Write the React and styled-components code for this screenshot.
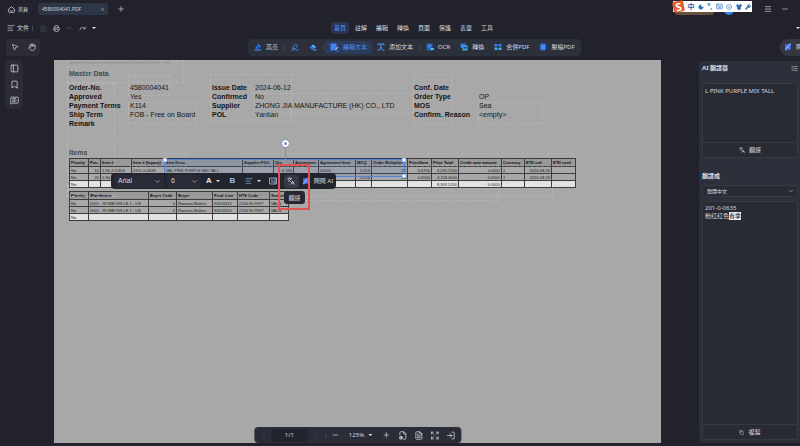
import React from 'react'
import styled, { createGlobalStyle } from 'styled-components'
import {
    AlignLeft, Bookmark, ChevronDown, ChevronLeft, ChevronRight, Copy, Expand, FileCog, FileText,
    Hand, Languages, ListCollapse, LogIn, Menu, MessageSquareText, Minus, MousePointer2, PanelLeft,
    Plus, Printer, Redo, Save, Shirt, Smile, Keyboard, Moon, Undo, Wrench, X,
} from 'lucide-react'

const GlobalStyle = createGlobalStyle`
    * { box-sizing: border-box; }
    body {
        margin: 0;
        background: #21222b;
        color: #d6d8de;
        font-family: "Noto Sans", "Noto Sans CJK TC", sans-serif;
        font-size: 6px;
        line-height: 10px;
    }
    button, select, input, textarea {
        font: inherit;
        color: inherit;
        background: none;
        border: 0;
        margin: 0;
        padding: 0;
    }
    svg { display: block; flex: none; }
    h2, h3, p, dl, dd, dt { margin: 0; }
`

const menus = ['首頁', '註解', '編輯', '轉換', '頁面', '保護', '表單', '工具']

const details = [
    ['Order-No.', '4580004041', 'Issue Date', '2024-06-12', 'Conf. Date', ''],
    ['Approved', 'Yes', 'Confirmed', 'No', 'Order Type', 'OP'],
    ['Payment Terms', 'K114', 'Supplier', 'ZHONG JIA MANUFACTURE (HK) CO., LTD', 'MOS', 'Sea'],
    ['Ship Term', 'FOB - Free on Board', 'POL', 'Yantian', 'Confirm. Reason', '<empty>'],
    ['Remark', '', '', '', '', ''],
]

const itemCols = [
    ['Priority', 19], ['Pos.', 12], ['Item #', 31], ['Item # (legacy)', 33], ['Item Desc.', 78],
    ['Supplier PO#', 31], ['Qty.', 20], ['Agreement', 25], ['Agreement Item', 37], ['MOQ', 16],
    ['Order Multiplier', 36], ['Price/Item', 24], ['Price Total', 27], ['Credit note amount', 43],
    ['Currency', 23], ['ETD ord.', 27], ['ETD conf.', 24],
]
const itemRows = [
    ['No', '10', '1-90-201304', '2201-0-0636', 'VAL PINK PURPLE MIX TALL', '', '6,336', '', '00000', '5,016', '24', '0.6700', '4,245.1200', '0.0000', '1', '2024-08-26', ''],
    ['No', '20', '1-90-201305', '2201-0-0635', '', '', '6,336', '', '00000', '5,016', '24', '0.6500', '4,118.4000', '0.0000', '1', '2024-08-26', ''],
    ['No', '', '', '', '', '', '', '', '', '', '', '', '8,363.5200', '0.0000', '', '', ''],
]
const itemRight = [1, 6, 9, 10, 11, 12, 13, 15]

const storeCols = [
    ['Priority', 19], ['Warehouse', 60], ['Buyer Code', 28], ['Buyer', 36],
    ['Prod. Line', 25], ['HTS Code', 32], ['Season', 19],
]
const storeRows = [
    ['No', '0001 - ROMEOVILLE 1 - US', '0', 'Rowena Malinis', '93010315', '2106.90.9997', 'VALN'],
    ['No', '0001 - ROMEOVILLE 1 - US', '0', 'Rowena Malinis', '93010315', '2106.90.9997', 'VALN'],
    ['No', '', '', '', '', '', ''],
]

// editable text blocks: left, top, width, height
const blocks = [
    [13, 0, 117, 23], [13, 23, 48, 114], [74, 15, 42, 21], [74, 42, 68, 22], [156, 14, 82, 48],
    [200, 33, 160, 21], [359, 14, 39, 50], [424, 42, 65, 22], [76, 93, 57, 14],
    [187, 93, 333, 14], [230, 105, 215, 36], [13, 125, 486, 12],
]

/* ---------- icons ---------- */

const HomeIcon = () => (
    <svg width="7" height="7" viewBox="0 0 16 16" fill="none" stroke="currentColor" strokeWidth="1.8">
        <path d="M1.5 7 8 1.5 14.5 7v6a1.5 1.5 0 0 1-1.5 1.5H3A1.5 1.5 0 0 1 1.5 13zM5.5 10.5c1.5 1.4 3.500 1.400 5 0" />
    </svg>
)

const PenIcon = () => (
    <svg width="8" height="8" viewBox="0 0 16 16">
        <path fill="#2f7df0" d="M3 9 9 2l5 5-5 5H4z" />
        <path fill="#1c4fa8" d="m7 5 5 4-3 3H5z" />
        <path fill="#4a94ff" d="M1 13h13v2H1z" />
    </svg>
)

const MarkerIcon = () => (
    <svg width="8" height="8" viewBox="0 0 16 16">
        <path fill="none" stroke="#3d89f5" strokeWidth="1.7" d="m4 8 5-6 4 4-5 6H4z" />
        <path fill="#3d89f5" d="M1 13h5v2H1zM9 13h6v2H9zM4 8l4 4H4z" />
    </svg>
)

const EraserIcon = () => (
    <svg width="8" height="8" viewBox="0 0 16 16">
        <path fill="#2f6fd8" d="m1 8 7-5 6 5-5 5H5z" />
        <path fill="#58b4f5" d="m8 3 6 5-3 2-6-4zM9 13h6v2H8z" />
    </svg>
)

const EditTextIcon = () => (
    <svg width="9" height="9" viewBox="0 0 18 18">
        <path fill="#3d84f7" d="M1 1h12v7l-6 7H1z" />
        <path fill="#8fc0ff" d="m9 15 1-3 5-5 2 2-5 5z" />
        <path fill="#3d84f7" d="M13 15h4v2h-4z" />
    </svg>
)

const AddTextIcon = () => (
    <svg width="8" height="8" viewBox="0 0 16 16" fill="none" stroke="#4a94ff" strokeWidth="2">
        <path d="M2 5V2h12v3M8 2v6M1 14h4l3-6 3 6h4" />
    </svg>
)

const OcrIcon = () => (
    <svg width="8" height="8" viewBox="0 0 16 16">
        <path fill="#245fbd" d="M1 1h12v14H1z" />
        <path stroke="#5aa1ff" strokeWidth="1.500" d="M3 5h8M3 8h6" />
        <path fill="#49b7d8" d="M9 10h7v4H9z" />
    </svg>
)

const ConvertIcon = () => (
    <svg width="8" height="8" viewBox="0 0 16 16">
        <path fill="#2b7bf0" d="M1 1h10v9H1z" />
        <path fill="#4ba3ea" d="M5 5h10v10H5z" />
        <path fill="#173d7c" d="M7 8h6v3H7z" />
    </svg>
)

const MergeIcon = () => (
    <svg width="8" height="8" viewBox="0 0 16 16">
        <path fill="#3181f5" d="M1 2h6v5H1zM9 2h6v5H9z" />
        <path fill="#4da8ee" d="M1 9h6v5H1zM9 9h6v5H9z" />
        <path stroke="#173d7c" strokeWidth="1.500" d="M5 8h6" />
    </svg>
)

const CompressIcon = () => (
    <svg width="8" height="8" viewBox="0 0 16 16">
        <path fill="#2b74e4" d="M3 1h10v14H3z" />
        <path fill="#174b9c" d="M0 5h3v7H0zM13 5h3v7h-3z" />
        <path stroke="#6fb4ff" strokeWidth="1.500" d="M3 6h10M3 10h10" />
    </svg>
)

const AiIcon = () => (
    <svg width="8" height="8" viewBox="0 0 16 16">
        <path fill="#3e6df0" d="M2 3 14 1l-1 12-11 2z" />
        <path fill="none" stroke="#b9d4ff" strokeWidth="1.600" d="M3 14C5 8 9 4 14 2M6 6l5 5" />
    </svg>
)

const FrameIcon = () => (
    <svg width="8" height="8" viewBox="0 0 16 16" fill="none" stroke="#a9bfe8" strokeWidth="1.600">
        <path d="M1 2h14v12H1zM4 6h5M4 10h8M12 2v12" />
    </svg>
)

/* ---------- parts ---------- */

function Grid({ cols, rows, right }) {
    return (
        <DataTable $width={cols.reduce((sum, col) => sum + col[1], 0)}>
            <colgroup>
                {cols.map(([name, width]) => <Col key={name} $width={width} />)}
            </colgroup>
            <thead>
                <tr>{cols.map(([name]) => <th key={name}>{name}</th>)}</tr>
            </thead>
            <tbody>
                {rows.map((row, i) => (
                    <tr key={i}>
                        {row.map((cell, j) => <Cell key={j} $right={right.includes(j)}>{cell}</Cell>)}
                    </tr>
                ))}
            </tbody>
        </DataTable>
    )
}

function TopBar() {
    return (
        <header>
            <TitleBar>
                <HomeTab><HomeIcon />首頁</HomeTab>
                <FileTab>
                    <span>4580004041.PDF</span>
                    <button aria-label="Close tab"><X size={5} /></button>
                </FileTab>
                <IconButton aria-label="New tab"><Plus size={8} /></IconButton>
                <WindowTools>
                    <IconButton aria-label="Menu"><Menu size={8} /></IconButton>
                    <IconButton aria-label="Minimize"><Minus size={8} /></IconButton>
                </WindowTools>
                <Upgrade />
                <Avatar />
                <ImeBar>
                    <ImeLogo>S</ImeLogo>
                    <span>中</span>
                    <Moon size={6} fill="currentColor" />
                    <span>°,</span>
                    <Keyboard size={7} />
                    <Smile size={6} />
                    <Shirt size={6} fill="currentColor" />
                    <Wrench size={6} fill="currentColor" />
                </ImeBar>
            </TitleBar>

            <MenuRow>
                <Side>
                    <FileGroup>
                        <FileButton><AlignLeft size={8} />文件</FileButton>
                        <Divider />
                    </FileGroup>
                    <IconButton aria-label="Save" $dim><Save size={7} /></IconButton>
                    <IconButton aria-label="Print"><Printer size={7} /></IconButton>
                    <IconButton aria-label="Undo" $dim><Undo size={7} /></IconButton>
                    <IconButton aria-label="Redo"><Redo size={7} /></IconButton>
                    <IconButton aria-label="More"><Caret /></IconButton>
                </Side>
                <Menus>
                    {menus.map((name, i) => <MenuItem key={name} $active={i === 0}>{name}</MenuItem>)}
                </Menus>
                <HideRibbon aria-label="Hide toolbar"><Caret /></HideRibbon>
            </MenuRow>

            <ToolRow>
                <Side>
                    <Pointers>
                        <IconButton aria-label="Select"><MousePointer2 size={8} /></IconButton>
                        <IconButton aria-label="Pan"><Hand size={8} /></IconButton>
                    </Pointers>
                </Side>
                <Tools>
                    <Tool><PenIcon />高亮</Tool>
                    <Divider />
                    <Tool aria-label="Marker"><MarkerIcon /></Tool>
                    <Tool aria-label="Eraser"><EraserIcon /></Tool>
                    <Divider />
                    <Tool $active><EditTextIcon />編輯文本</Tool>
                    <Tool><AddTextIcon />添加文本</Tool>
                    <Divider />
                    <Tool><OcrIcon />OCR</Tool>
                    <Tool><ConvertIcon />轉換</Tool>
                    <Tool><MergeIcon />合併PDF</Tool>
                    <Tool><CompressIcon />壓縮PDF</Tool>
                </Tools>
                <AskAi><AiIcon />問問 AI</AskAi>
            </ToolRow>
        </header>
    )
}

function TextToolbar() {
    return (
        <FloatBar>
            <PickBox $width={50}>
                <select aria-label="Font"><option>Arial</option></select>
                <ChevronDown size={7} />
            </PickBox>
            <PickBox $width={34}>
                <select aria-label="Font size"><option>6</option></select>
                <ChevronDown size={7} />
            </PickBox>
            <FormatButton aria-label="Text color">A<Caret /></FormatButton>
            <FormatButton aria-label="Bold" $blue>B</FormatButton>
            <FormatButton aria-label="Align"><AlignLeft size={8} color="#8fb0ee" /><Caret /></FormatButton>
            <FormatButton aria-label="Text box"><FrameIcon /></FormatButton>
            <FormatButton aria-label="Translate" $active><Languages size={8} /></FormatButton>
            <AskButton><AiIcon />問問 AI</AskButton>
        </FloatBar>
    )
}

function PageControls() {
    return (
        <PageBar>
            <IconButton aria-label="Previous page" $dim><ChevronLeft size={8} /></IconButton>
            <PageInput aria-label="Page" defaultValue="1/1" />
            <IconButton aria-label="Next page" $dim><ChevronRight size={8} /></IconButton>
            <Divider />
            <IconButton aria-label="Zoom out"><Minus size={8} /></IconButton>
            <Zoom>125%<Caret /></Zoom>
            <IconButton aria-label="Zoom in"><Plus size={8} /></IconButton>
            <ViewTools>
                <IconButton aria-label="Page view"><FileCog size={9} /></IconButton>
                <IconButton aria-label="Page layout"><FileText size={9} /></IconButton>
                <IconButton aria-label="Full screen"><Expand size={9} /></IconButton>
                <IconButton aria-label="Leave"><LogIn size={9} /></IconButton>
            </ViewTools>
        </PageBar>
    )
}

function Translator() {
    return (
        <Panel>
            <PanelHead>
                <h2>AI 翻譯器</h2>
                <IconButton aria-label="Collapse"><ListCollapse size={7} /></IconButton>
            </PanelHead>
            <SourceBox>
                <textarea aria-label="Source text" defaultValue="L PINK PURPLE MIX TALL" />
                <BoxButton><Languages size={6} />翻譯</BoxButton>
            </SourceBox>
            <TargetLabel htmlFor="target">翻譯成</TargetLabel>
            <TargetPick>
                <select id="target"><option>簡體中文</option></select>
                <ChevronDown size={6} />
            </TargetPick>
            <ResultBox>
                <Result lang="zh-CN">201-0-0635<br />粉红红色<mark>春季</mark></Result>
                <BoxButton><Copy size={5} />複製</BoxButton>
            </ResultBox>
        </Panel>
    )
}

function App() {
    return (
        <Shell>
            <GlobalStyle />
            <TopBar />
            <Body>
                <Rail>
                    <RailGroup>
                        <IconButton aria-label="Thumbnails"><PanelLeft size={9} /></IconButton>
                        <IconButton aria-label="Bookmarks"><Bookmark size={9} /></IconButton>
                        <IconButton aria-label="Comments"><MessageSquareText size={9} /></IconButton>
                    </RailGroup>
                </Rail>

                <Page>
                    <PrintNote>Written|Purchase Order|Uta Blum|13.06.2024 09:22_CSI</PrintNote>
                    <Heading>Master Data</Heading>
                    <Details>
                        {details.flat().map((text, i) => (
                            i % 2 ? <dd key={i}>{text}</dd> : <dt key={i}>{text}</dt>
                        ))}
                    </Details>
                    <Heading>Items</Heading>
                    <Tables>
                        <Grid cols={itemCols} rows={itemRows} right={itemRight} />
                        <Grid cols={storeCols} rows={storeRows} right={[2]} />
                    </Tables>

                    {blocks.map(([left, top, width, height]) => (
                        <TextBlock key={`${left}-${top}`} style={{ left, top, width, height }} />
                    ))}
                    <Selection>
                        <Stem />
                        <Rotate />
                        <Handle $left={0} $top={0} />
                        <Handle $left={100} $top={0} />
                        <Handle $left={100} $top={100} />
                    </Selection>
                    <TextToolbar />
                    <Tip role="tooltip">翻譯</Tip>
                    <RedFrame />
                    <PageControls />
                </Page>

                <Translator />
            </Body>
        </Shell>
    )
}

/* ---------- styles ---------- */

const Shell = styled.div`
    display: flex;
    flex-direction: column;
    min-height: 100vh;
    padding-bottom: 3px;
    overflow: hidden;
`

const TitleBar = styled.div`
    position: relative;
    display: flex;
    align-items: center;
    height: 18px;
    padding-left: 5px;
    font-size: 5px;
`

const HomeTab = styled.button`
    display: flex;
    align-items: center;
    gap: 3px;
    width: 27px;
    height: 12px;
    padding-left: 3px;
    border-radius: 3px;
    background: #25262d;
`

const FileTab = styled.div`
    display: flex;
    align-items: center;
    justify-content: space-between;
    width: 70px;
    height: 12px;
    margin: 0 9px 0 6px;
    padding: 0 3px 0 4px;
    border-radius: 3px;
    background: #2d3646;
`

const IconButton = styled.button`
    display: flex;
    align-items: center;
    justify-content: center;
    color: ${({ $dim }) => ($dim ? '#484b56' : '#d6d8de')};
`

const WindowTools = styled.div`
    display: flex;
    gap: 9px;
    margin-left: auto;
    padding-right: 11px;
`

const Upgrade = styled.span`
    position: absolute;
    right: 86px;
    top: 3px;
    width: 39px;
    height: 12px;
    border-radius: 3px;
    background: #66503c;
`

const Avatar = styled.span`
    position: absolute;
    right: 66px;
    top: 5px;
    width: 10px;
    height: 10px;
    border-radius: 50%;
    background: #3a7ff0;
`

const ImeBar = styled.div`
    position: absolute;
    right: 48px;
    top: 1px;
    display: flex;
    align-items: center;
    justify-content: space-between;
    width: 79px;
    height: 11px;
    padding-right: 1px;
    background: #fff;
    color: #2468b4;
    font-size: 7px;
    font-weight: 700;
`

const ImeLogo = styled.span`
    width: 11px;
    height: 11px;
    border-radius: 2px;
    background: #ec5a2c;
    color: #fff;
    font-size: 11px;
    line-height: 11px;
    text-align: center;
    transform: rotate(-12deg);
`

const MenuRow = styled.div`
    display: flex;
    align-items: center;
    height: 20px;
`

const ToolRow = styled.div`
    display: flex;
    align-items: center;
    height: 18px;
    margin-bottom: 4px;
`

const Side = styled.div`
    display: flex;
    align-items: center;
    gap: 6px;
    flex: none;
    width: 248px;
    padding-left: 6px;
`

const FileGroup = styled.div`
    display: flex;
    align-items: center;
    gap: 2px;
`

const FileButton = styled.button`
    display: flex;
    align-items: center;
    gap: 2px;
    width: 23px;
    padding-left: 1px;
    white-space: nowrap;
`

const Divider = styled.span`
    flex: none;
    width: 1px;
    height: 5px;
    margin: 0 1px;
    background: #444854;
`

const Caret = styled.span`
    width: 0;
    border: 2px solid transparent;
    border-top-color: #e4e6ea;
    border-bottom: 0;
`

const Menus = styled.nav`
    display: flex;
    gap: 3px;
    padding-left: 83px;
`

const MenuItem = styled.button`
    width: 18px;
    height: 12px;
    border-radius: 3px;
    text-align: center;
    background: ${({ $active }) => ($active ? '#2b3550' : 'none')};
    color: ${({ $active }) => ($active ? '#4b8dfa' : '#d6d8de')};
`

const HideRibbon = styled.button`
    display: flex;
    margin-left: auto;
`

const Pointers = styled.div`
    display: flex;
    justify-content: space-around;
    width: 34px;
    height: 17px;
    border-radius: 4px;
    background: #2c2d36;
`

const Tools = styled.div`
    display: flex;
    align-items: center;
    height: 17px;
    padding: 0 1px;
    border-radius: 4px;
    background: #2c303b;
`

const Tool = styled.button`
    display: flex;
    align-items: center;
    gap: 4px;
    height: 13px;
    padding: 0 5px;
    border-radius: 3px;
    white-space: nowrap;
    background: ${({ $active }) => ($active ? '#2c3b5c' : 'none')};
    color: ${({ $active }) => ($active ? '#4b8dfa' : '#d6d8de')};
`

// runs off the right edge of a narrow window
const AskAi = styled.button`
    display: flex;
    align-items: center;
    gap: 4px;
    width: 20px;
    height: 17px;
    margin-left: auto;
    padding-left: 4px;
    border-radius: 8px 0 0 8px;
    overflow: hidden;
    white-space: nowrap;
    background: #343742;
`

const Body = styled.div`
    display: flex;
    flex: 1;
`

const Rail = styled.aside`
    flex: none;
    width: 54px;
    padding-left: 5px;
`

const RailGroup = styled.div`
    display: flex;
    flex-direction: column;
    justify-content: space-around;
    width: 18px;
    height: 49px;
    border-radius: 5px;
    background: #2b2c36;
    button { width: 18px; }
`

const Page = styled.main`
    position: relative;
    flex: 1;
    min-width: 0;
    padding: 0 15px;
    background: #a8a8a8;
    color: #151515;
    font-family: "Liberation Sans", sans-serif;
`

const PrintNote = styled.p`
    height: 5px;
    font-size: 4px;
    line-height: 5px;
    color: #8b8b8b;
`

const Heading = styled.h3`
    margin-top: 4px;
    font-size: 7px;
    line-height: 10px;
    color: #484848;
`

const Details = styled.dl`
    display: grid;
    grid-template-columns: 61px 82px 43px 159px 65px auto;
    grid-auto-rows: 9px;
    margin: 4px 0 20px;
    font-size: 7px;
    line-height: 9px;
    white-space: nowrap;
    dt { font-weight: 700; }
`

const Tables = styled.div`
    display: grid;
    gap: 3px;
    justify-items: start;
`

const DataTable = styled.table`
    width: ${({ $width }) => $width}px;
    table-layout: fixed;
    border-collapse: collapse;
    font-size: 4px;
    line-height: 5px;
    white-space: nowrap;
    color: #181818;
    th, td {
        height: 7px;
        padding: 0 1px;
        border: 1px solid #3c3c3c;
        text-align: left;
    }
    th { background: #999; height: 8px; color: #0c0c0c; }
    tbody tr:last-child td { background: #e2e2e2; }
`

const Col = styled.col`
    width: ${({ $width }) => $width}px;
`

const Cell = styled.td`
    && { text-align: ${({ $right }) => ($right ? 'right' : 'left')}; }
`

const TextBlock = styled.span`
    position: absolute;
    border: 1px dashed rgba(255, 255, 255, 0.14);
    pointer-events: none;
`

const Selection = styled.div`
    position: absolute;
    left: 110px;
    top: 99px;
    width: 241px;
    height: 18px;
    border: 1px solid #5681d8;
    background: rgba(80, 120, 200, 0.14);
`

const Stem = styled.span`
    position: absolute;
    left: 50%;
    bottom: 100%;
    width: 1px;
    height: 14px;
    background: #6d8fd6;
`

const Rotate = styled.span`
    position: absolute;
    left: 50%;
    top: -20px;
    width: 7px;
    height: 7px;
    margin-left: -3px;
    border: 2px solid #fff;
    border-radius: 50%;
    background: #7891c8;
    outline: 1px solid #8fa2cc;
`

const Handle = styled.span`
    position: absolute;
    left: ${({ $left }) => $left}%;
    top: ${({ $top }) => $top}%;
    width: 4px;
    height: 4px;
    margin: -2px;
    border: 1px solid #a9c0f0;
    background: #fff;
`

const FloatBar = styled.div`
    position: absolute;
    left: 57px;
    top: 113px;
    display: flex;
    align-items: center;
    gap: 3px;
    height: 16px;
    padding: 0 3px;
    border-radius: 4px;
    background: #22242e;
    color: #d6d8de;
`

const PickBox = styled.div`
    display: flex;
    align-items: center;
    width: ${({ $width }) => $width}px;
    height: 13px;
    padding: 0 3px 0 4px;
    border-radius: 3px;
    background: #292c37;
    font-size: 7px;
    select {
        flex: 1;
        min-width: 0;
        appearance: none;
    }
`

const FormatButton = styled.button`
    display: flex;
    align-items: center;
    justify-content: center;
    gap: 4px;
    min-width: 15px;
    height: 13px;
    padding: 0 2px;
    border-radius: 3px;
    font-size: 8px;
    font-weight: 700;
    background: ${({ $active }) => ($active ? '#363946' : 'none')};
    color: ${({ $blue }) => ($blue ? '#9dbcf2' : '#e4e6ea')};
`

const AskButton = styled.button`
    display: flex;
    align-items: center;
    gap: 4px;
    white-space: nowrap;
    font-family: "Noto Sans", "Noto Sans CJK TC", sans-serif;
`

const Tip = styled.div`
    position: absolute;
    left: 230px;
    top: 131px;
    width: 21px;
    height: 13px;
    border-radius: 3px;
    background: #252731;
    color: #d6d8de;
    font-family: "Noto Sans CJK TC", sans-serif;
    line-height: 13px;
    text-align: center;
`

const RedFrame = styled.span`
    position: absolute;
    left: 224px;
    top: 104px;
    width: 32px;
    height: 46px;
    border: 2px solid #e25353;
    pointer-events: none;
`

const PageBar = styled.div`
    position: absolute;
    left: 50%;
    bottom: 0;
    display: flex;
    align-items: center;
    gap: 4px;
    height: 16px;
    padding: 0 6px 0 5px;
    border-radius: 4px;
    background: #2a2d38;
    color: #d6d8de;
    font-family: "Noto Sans", sans-serif;
    transform: translateX(-50%);
`

const PageInput = styled.input`
    width: 37px;
    height: 13px;
    border-radius: 4px;
    background: #22252f;
    text-align: center;
`

const Zoom = styled.button`
    display: flex;
    align-items: center;
    gap: 4px;
    padding: 0 6px;
`

const ViewTools = styled.div`
    display: flex;
    gap: 7px;
    padding-left: 4px;
`

const Panel = styled.aside`
    display: flex;
    flex-direction: column;
    flex: none;
    width: 101px;
    margin: 1px 0 0 38px;
    padding: 0 2px 3px 3px;
    border-radius: 4px 0 0 4px;
    background: #2d303b;
`

const PanelHead = styled.div`
    display: flex;
    align-items: center;
    justify-content: space-between;
    height: 14px;
    margin-bottom: 8px;
    h2 { font-size: 6px; }
`

const Box = styled.div`
    display: flex;
    flex-direction: column;
    border: 1px solid #363a46;
    border-radius: 3px;
    background: #282b34;
`

const SourceBox = styled(Box)`
    height: 75px;
    textarea {
        flex: 1;
        padding: 2px;
        resize: none;
    }
`

const BoxButton = styled.button`
    display: flex;
    align-items: center;
    justify-content: center;
    gap: 4px;
    height: 15px;
    border-top: 1px solid #363a46;
`

const TargetLabel = styled.label`
    margin: 13px 0 4px;
    font-weight: 700;
`

const TargetPick = styled.div`
    display: flex;
    align-items: center;
    height: 12px;
    margin-bottom: 4px;
    padding: 0 3px 0 4px;
    border: 1px solid #363a46;
    border-radius: 3px;
    background: #282b34;
    font-size: 5px;
    select {
        flex: 1;
        appearance: none;
    }
`

const ResultBox = styled(Box)`
    flex: 1;
`

const Result = styled.p`
    flex: 1;
    padding: 2px;
    line-height: 8px;
    font-family: "Noto Sans", "Noto Sans CJK SC", sans-serif;
    mark {
        background: #eee;
        color: #17181c;
    }
`

export default App
